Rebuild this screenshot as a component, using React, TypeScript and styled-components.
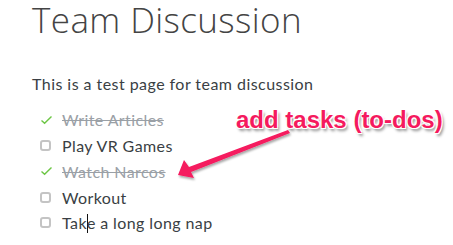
import React from "react";
import styled, {createGlobalStyle} from "styled-components";

const GlobalStyle = createGlobalStyle`
  html, body {
    margin: 0;
    padding: 0;
    background: #fff;
  }
`

interface Task {
    text: string
    done: boolean
    caret?: number
}

const tasks: Task[] = [
    {text: "Write Articles", done: true},
    {text: "Play VR Games", done: false},
    {text: "Watch Narcos", done: true},
    {text: "Workout", done: false},
    {text: "Take a long long nap", done: false, caret: 3},
]

const CheckIcon = () => (
    <svg width="13" height="10" viewBox="0 0 13 10">
        <path d="M1.5 5.4 L4.6 8.3 L11.5 1.4" fill="none" stroke="#6cc644" strokeWidth="1.4"/>
    </svg>
)

export default function App() {
    return (
        <Page>
            <GlobalStyle/>
            <Title>Team Discussion</Title>
            <Intro>This is a test page for team discussion</Intro>
            <List>
                {tasks.map((t) => (
                    <Item key={t.text}>
                        <Mark>{t.done ? <CheckIcon/> : <Box/>}</Mark>
                        <Label $done={t.done}>
                            {t.caret !== undefined ? (
                                <>
                                    {t.text.slice(0, t.caret)}
                                    <Caret/>
                                    {t.text.slice(t.caret)}
                                </>
                            ) : t.text}
                        </Label>
                    </Item>
                ))}
            </List>
            <Note>add tasks (to-dos)</Note>
            <Arrow width="130" height="65" viewBox="0 0 130 65">
                <defs>
                    <filter id="sh" x="-20%" y="-30%" width="140%" height="170%">
                        <feDropShadow dx="1" dy="2" stdDeviation="1.2" floodColor="#000" floodOpacity="0.35"/>
                    </filter>
                </defs>
                <path d="M118 5 L19 42 L14 35 L8 50 L24 53 L21 47 L120 8 Z" fill="#f51a5e" filter="url(#sh)"/>
            </Arrow>
        </Page>
    )
}

const Page = styled.div`
  position: relative;
  width: 453px;
  height: 245px;
  padding: 0 0 0 32px;
  box-sizing: border-box;
  overflow: hidden;
`

const Title = styled.h1`
  margin: 0;
  font-family: "Open Sans", sans-serif;
  font-weight: 300;
  font-size: 35px;
  letter-spacing: 0.4px;
  line-height: 40px;
  white-space: nowrap;
  color: #444;
`

const Intro = styled.p`
  margin: 34px 0 0;
  font-family: "Lato", sans-serif;
  font-size: 16px;
  letter-spacing: 0.45px;
  line-height: 20px;
  color: #3a3f44;
`

const List = styled.ul`
  list-style: none;
  margin: 13px 0 0;
  padding: 0 0 0 8px;
`

const Item = styled.li`
  display: flex;
  align-items: center;
  height: 25.75px;
`

const Mark = styled.span`
  width: 22px;
  flex-shrink: 0;
  display: flex;
  align-items: center;
`

const Box = styled.span`
  display: block;
  width: 11px;
  height: 11px;
  box-sizing: border-box;
  border: 2px solid #c4c4c4;
  border-radius: 3px;
`

const Label = styled.span<{ $done: boolean }>`
  font-family: "Lato", sans-serif;
  font-size: 16px;
  letter-spacing: 0.4px;
  color: ${({$done}) => $done ? "#9aa0a6" : "#3a3f44"};
  text-decoration: ${({$done}) => $done ? "line-through" : "none"};
`

const Caret = styled.span`
  display: inline-block;
  width: 1px;
  height: 19px;
  margin: 0 -1px -4px 0;
  background: #111;
`

const Note = styled.div`
  position: absolute;
  left: 236px;
  top: 106px;
  font-family: "Liberation Sans", Arial, sans-serif;
  font-weight: bold;
  font-size: 24px;
  line-height: 28px;
  color: #f51a5e;
  text-shadow: -1px -1px 0 #fff, 1px -1px 0 #fff, -1px 1px 0 #fff, 1px 1px 0 #fff, 2px 3px 3px rgba(0, 0, 0, 0.45);
`

const Arrow = styled.svg`
  position: absolute;
  left: 170px;
  top: 125px;
`
